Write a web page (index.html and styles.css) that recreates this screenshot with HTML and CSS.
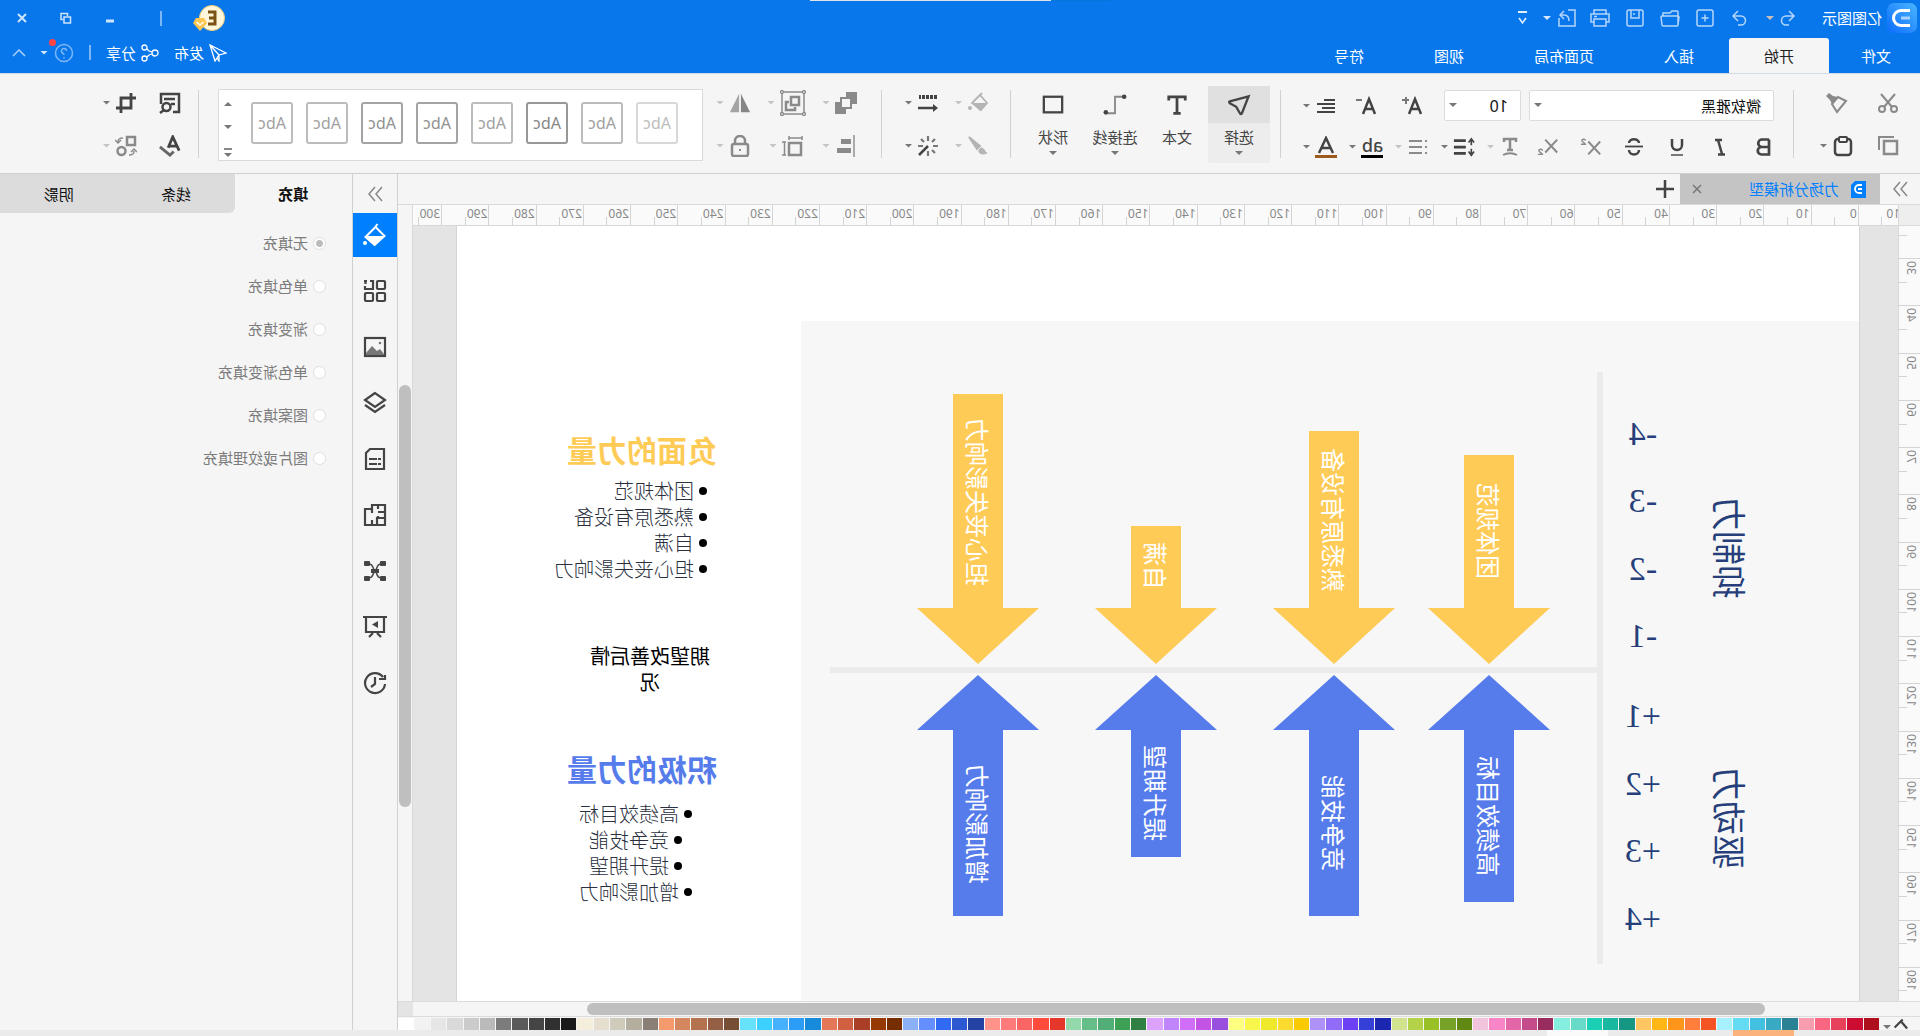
FILE: index.html
```html
<!DOCTYPE html>
<html lang="zh-CN">
<head>
<meta charset="utf-8">
<title>亿图图示</title>
<link rel="stylesheet" href="styles.css">
</head>
<body>
<div class="app">
  <header class="header">
    <div class="notch"></div>
    <div class="title-row">
      <svg class="logo" viewBox="0 0 30 30"><defs><linearGradient id="lg" x1="1" y1="1" x2="0" y2="0"><stop offset="0" stop-color="#0a6cff"/><stop offset="1" stop-color="#4bb6ff"/></linearGradient></defs><rect width="30" height="30" rx="7" fill="url(#lg)"/><path d="M7 7.500H16a7.500 7.500 0 0 1 0 15H7" fill="none" stroke="#fff" stroke-width="3"/><path d="M7 15H16" fill="none" stroke="#a9d3ff" stroke-width="3"/></svg>
      <span class="brand">亿图图示</span>
      <button class="quick q-first" aria-label="撤销"><svg viewBox="0 0 18 18"><path d="M7 2 2 7l5 5M2 7h8a4.500 4.500 0 0 1 0 9H7"/></svg></button>
      <i class="caret caret-title"></i>
      <button class="quick q-redo" aria-label="重做"><svg viewBox="0 0 18 18"><path d="M11 2l5 5-5 5M16 7H8a4.500 4.500 0 0 0 0 9h3"/></svg></button>
      <button class="quick" aria-label="新建"><svg viewBox="0 0 18 18"><rect x="1" y="1" width="16" height="16" rx="2"/><path d="M9 5.500v7M5.500 9h7"/></svg></button>
      <button class="quick" aria-label="打开"><svg viewBox="0 0 20 18"><path d="M2 16V3a1 1 0 0 1 1-1h5l2 2h7v3M2 16 1 8a1 1 0 0 1 1-1h16a1 1 0 0 1 1 1l-1 8a1 1 0 0 1-1 1H3a1 1 0 0 1-1-1z"/></svg></button>
      <button class="quick" aria-label="保存"><svg viewBox="0 0 18 18"><rect x="1" y="1" width="16" height="16" rx="2"/><path d="M5 1v8h8V1M10 4v2"/></svg></button>
      <button class="quick" aria-label="打印"><svg viewBox="0 0 20 18"><path d="M4 5V1h12v4M4 13H1V5h18v8h-3M4 10h12v7H4zM13 7.500h3"/></svg></button>
      <button class="quick q-export" aria-label="导出"><svg viewBox="0 0 18 18"><path d="M8 1H1v16h16V9M12 2l4 4-4 4M16 6h-4c-3 0-5 2-5 6"/></svg></button>
      <i class="caret caret-white"></i>
      <button class="quick q-more" aria-label="自定义"><svg viewBox="0 0 18 18"><path d="M5 3h9" stroke-width="2"/><path d="M6 9l3.500 5L13 9"/></svg></button>
      <span class="spacer"></span>
      <svg class="avatar" viewBox="0 0 36 30"><circle cx="15" cy="15" r="12.500" fill="#fff6dc" stroke="#f2cf75"/><path d="M19 9H12v12h7M12 15h6" fill="none" stroke="#7a5214" stroke-width="3"/><path d="M23 15h8l3 5-7 8-7-8z" fill="#ffc74f"/><path d="M23.500 19l3.500 3 3.500-3" fill="none" stroke="#fff" stroke-width="1.500"/></svg>
      <span class="bar bar-title"></span>
      <button class="win" aria-label="最小化"><svg viewBox="0 0 12 12"><path d="M2 9h8" stroke-width="3"/></svg></button>
      <button class="win" aria-label="还原"><svg viewBox="0 0 12 12"><path d="M1.500 5h6.500v6H1.500zM4.500 4V1.500h6.500v6H9"/></svg></button>
      <button class="win" aria-label="关闭"><svg viewBox="0 0 12 12"><path d="M2 2l8 8M10 2l-8 8" stroke-width="2"/></svg></button>
    </div>
    <div class="menu-row">
      <nav class="tabs">
        <a href="#" class="tab tab-file">文件</a>
        <a href="#" class="tab is-active">开始</a>
        <a href="#" class="tab">插入</a>
        <a href="#" class="tab">页面布局</a>
        <a href="#" class="tab">视图</a>
        <a href="#" class="tab">符号</a>
      </nav>
      <span class="spacer"></span>
      <button class="act"><svg viewBox="0 0 18 18"><path d="M1 9 17 1l-5 16-4-6zM17 1 8 11v6l2-3"/></svg>发布</button>
      <button class="act"><svg viewBox="0 0 18 18"><circle cx="4" cy="9" r="3"/><circle cx="14.500" cy="3.500" r="2.500"/><circle cx="14.500" cy="14.500" r="2.500"/><path d="M7 8l3-1 2-2M7 10l3 1 2 2"/></svg>分享</button>
      <span class="bar bar-menu"></span>
      <button class="help" aria-label="帮助"><svg viewBox="0 0 20 20"><circle cx="10" cy="10" r="8.500"/><path d="M7.500 8a2.500 2.500 0 1 1 3.500 2.300c-.7.400-1 .8-1 1.700M10 14v1.500"/></svg><span class="dot"></span></button>
      <i class="caret caret-white"></i>
      <button class="fold" aria-label="折叠"><svg viewBox="0 0 14 8"><path d="M1 7l6-6 6 6"/></svg></button>
    </div>
  </header>

  <section class="toolbar">
    <div class="group clip">
      <button class="tool mid" aria-label="剪切"><svg viewBox="0 0 22 22"><path d="M4 2l11 13M18 2 7 15" stroke-width="2"/><circle cx="5" cy="17" r="3"/><circle cx="17" cy="17" r="3"/></svg></button>
      <button class="tool mid" aria-label="格式刷"><svg viewBox="0 0 22 22"><path d="M2 9l8-4 6 7-5 8z" stroke-width="2"/><path d="M10 5l6 7 2-4 4-4-3-3-4 3z" fill="#8a8a8a" stroke="none"/></svg></button>
      <button class="tool mid" aria-label="复制"><svg viewBox="0 0 22 22"><rect x="2" y="2" width="0" height="0"/><rect x="2" y="6" width="13" height="13" stroke-width="2.500"/><path d="M5 2h15v13" stroke-width="2"/></svg></button>
      <button class="tool" aria-label="粘贴"><svg viewBox="0 0 22 22"><rect x="3" y="4" width="16" height="16" rx="3" stroke-width="2.500"/><rect x="7" y="2" width="8" height="5" rx="1" fill="#f5f5f5" stroke-width="2"/></svg><i class="caret"></i></button>
    </div>
    <span class="rule"></span>
    <div class="group font">
      <div class="frow">
        <label class="combo"><select aria-label="字体"><option>微软雅黑</option></select><i class="caret"></i></label>
        <label class="combo size"><select aria-label="字号"><option>10</option></select><i class="caret"></i></label>
        <button class="tool" aria-label="增大字号"><svg viewBox="0 0 22 22"><path d="M2 19 8 4l6 15M4 14h8" stroke-width="2.500"/><path d="M17 2v7M14 5h7" stroke-width="2" stroke="#777"/></svg></button>
        <button class="tool" aria-label="减小字号"><svg viewBox="0 0 22 22"><path d="M2 19 8 4l6 15M4 14h8" stroke-width="2.500"/><path d="M15 5h6" stroke-width="2" stroke="#777"/></svg></button>
        <button class="tool" aria-label="对齐"><svg viewBox="0 0 22 22"><path d="M2 5h11M2 9h18M2 13h13M2 17h18" stroke-width="2"/></svg><i class="caret"></i></button>
      </div>
      <div class="frow">
        <button class="tool narrow" aria-label="粗体"><svg viewBox="0 0 22 22"><path d="M5 3.500h7a3.700 3.700 0 0 1 0 7.500H5M5 11h7.500a3.700 3.700 0 0 1 0 7.500H5zM5 3.500v15" stroke-width="2.700"/></svg></button>
        <button class="tool narrow" aria-label="斜体"><svg viewBox="0 0 22 22"><path d="M9 4h7M6 18.500h7M13 4 9 18" stroke-width="2.500"/></svg></button>
        <button class="tool narrow" aria-label="下划线"><svg viewBox="0 0 22 22"><path d="M6 3v6a5 5 0 0 0 10 0V3" stroke-width="2.500"/><path d="M5 19h12" stroke-width="2" stroke="#777"/></svg></button>
        <button class="tool narrow" aria-label="删除线"><svg viewBox="0 0 22 22"><path d="M16 7c0-5-10-5-10 0M6 14c0 6 10 6 10 0" stroke-width="2.500"/><path d="M2 10.500h18" stroke-width="1.800"/></svg></button>
        <button class="tool narrow mid" aria-label="上标"><svg viewBox="0 0 24 22"><path d="M2 5l13 14M15 5 2 19" stroke-width="2.200"/><path d="M18 4c0-2 4-2 4 0 0 1.500-4 3-4 4h5" stroke-width="1.500"/></svg></button>
        <button class="tool narrow mid" aria-label="下标"><svg viewBox="0 0 24 22"><path d="M2 3l13 14M15 3 2 17" stroke-width="2.200"/><path d="M18 15c0-2 4-2 4 0 0 1.500-4 3-4 4h5" stroke-width="1.500"/></svg></button>
        <button class="tool off mid" aria-label="文字方向"><svg viewBox="0 0 22 22"><path d="M5 6V3h12v3M11 3v11M8 14h6" stroke-width="2.500"/><path d="M4 19c4-2.500 10-2.500 14 0" stroke-width="2"/></svg><i class="caret"></i></button>
        <button class="tool" aria-label="行距"><svg viewBox="0 0 24 22"><path d="M10 4h13M10 11h13M10 18h13" stroke-width="3"/><path d="M4 3v6M4 13v6M1 6l3-4 3 4M1 16l3 4 3-4" stroke-width="1.800"/></svg><i class="caret"></i></button>
        <button class="tool off mid" aria-label="项目符号"><svg viewBox="0 0 22 22"><path d="M2 5h2M2 11h2M2 17h2M7 5h13M7 11h13M7 17h13" stroke-width="2"/></svg><i class="caret"></i></button>
        <button class="tool" aria-label="突出显示"><span class="glyph glyph-hl">ab</span><i class="caret"></i></button>
        <button class="tool" aria-label="字体颜色"><span class="glyph glyph-color"><svg viewBox="0 0 18 18"><path d="M2 17 9 2l7 15M5 12h8" stroke-width="2.500"/></svg></span><i class="caret"></i></button>
      </div>
    </div>
    <span class="rule rule-font"></span>
    <div class="bigs">
      <button class="big is-on"><span class="big-icon"><svg viewBox="0 0 24 24"><path d="M1.500 3.500 22 9c1 .5 1 1.500 0 2l-7 4-4 7c-.8 1.200-1.800 1-2.200 0z" stroke-width="2.500" transform="translate(0 -1)"/></svg></span>选择<i class="caret"></i></button>
      <button class="big"><span class="big-icon"><svg viewBox="0 0 24 24"><path d="M3 7V3h18v4M12 3v18M8 21h8" stroke-width="3"/></svg></span>文本</button>
      <button class="big"><span class="big-icon"><svg viewBox="0 0 26 24"><path d="M4 3h9v18h9" stroke="#888" stroke-width="2"/><circle cx="3" cy="3" r="2.500" fill="#444" stroke="none"/><circle cx="23" cy="20" r="2.500" fill="#444" stroke="none"/></svg></span>连接线<i class="caret"></i></button>
      <button class="big"><span class="big-icon"><svg viewBox="0 0 24 24"><rect x="2" y="3" width="20" height="17" stroke-width="2.500"/></svg></span>形状<i class="caret"></i></button>
    </div>
    <span class="rule rule-bigs"></span>
    <div class="group two">
      <button class="tool off light" aria-label="填充颜色"><svg viewBox="0 0 22 22"><path d="M9 3 2 11l6 7 9-7-7-7M7 1l4 4" stroke-width="1.800"/><path d="M2 11h15l-8 8z" fill="#b4b4b4" stroke="none"/><circle cx="19" cy="16" r="2" fill="#b4b4b4" stroke="none"/></svg><i class="caret"></i></button>
      <button class="tool" aria-label="线条样式"><svg viewBox="0 0 22 22"><path d="M2 5h18" stroke-width="4" stroke-dasharray="3 1"/><path d="M4 16h17" stroke-width="2.500"/><path d="M6 12v8l-5-4z" fill="#444" stroke="none"/></svg><i class="caret"></i></button>
      <button class="tool off light" aria-label="线条颜色"><svg viewBox="0 0 22 22"><path d="M20 2 9 11l3 3z" fill="#b4b4b4" stroke-width="2"/><path d="M8 13c-4 0-3 4-6 5 4 2 9 1 8-3z" fill="#b4b4b4" stroke-width="1"/></svg><i class="caret"></i></button>
      <button class="tool" aria-label="效果"><svg viewBox="0 0 22 22"><path d="M11 11l9 9" stroke-width="2.500"/><path d="M11 1v5M11 16v5M1 11h5M16 11h5M4 4l3 3M18 4l-3 3M4 18l3-3" stroke-width="2.200" stroke="#777"/></svg><i class="caret"></i></button>
    </div>
    <span class="rule rule-style"></span>
    <div class="group three mid">
      <button class="tool off mid" aria-label="排列"><svg viewBox="0 0 22 22"><path d="M1 1h9v4H5v6H1zM21 21h-9v-4h5v-6h4z" fill="#8a8a8a"/><rect x="6" y="6" width="10" height="10" stroke-width="2"/></svg><i class="caret"></i></button>
      <button class="tool off mid" aria-label="组合"><svg class="wide" viewBox="0 0 26 26"><rect x="2" y="2" width="22" height="22" stroke-width="1.500"/><g fill="#f5f5f5" stroke-width="1.300"><circle cx="2" cy="2" r="1.500"/><circle cx="24" cy="2" r="1.500"/><circle cx="2" cy="24" r="1.500"/><circle cx="24" cy="24" r="1.500"/></g><rect x="7" y="7" width="8" height="8" stroke-width="2.500"/><path d="M17 12h3v8h-9v-3" stroke-width="2.500"/></svg><i class="caret"></i></button>
      <button class="tool off mid" aria-label="翻转"><svg viewBox="0 0 24 22"><path d="M11 1v20H1z" fill="#858585" stroke="none"/><path d="M13 1v20h10z" fill="#a4a4a4" stroke="none"/></svg><i class="caret"></i></button>
      <button class="tool off mid" aria-label="对齐"><svg viewBox="0 0 22 22"><path d="M3 0v22" stroke-width="2" stroke="#aaa"/><rect x="7" y="5" width="8" height="3" fill="#8a8a8a"/><rect x="7" y="14" width="12" height="3" fill="#8a8a8a"/></svg><i class="caret"></i></button>
      <button class="tool off mid" aria-label="大小"><svg viewBox="0 0 22 22"><rect x="3" y="8" width="12" height="12" stroke-width="2.500"/><path d="M2 3h13M2 1v4M15 1v4M19.500 7v13M18 7h4M18 20h4" stroke-width="1.500"/></svg><i class="caret"></i></button>
      <button class="tool off mid" aria-label="锁定"><svg viewBox="0 0 22 22"><rect x="3" y="9" width="16" height="12" rx="2" stroke-width="2.500"/><path d="M6 9V6a5 5 0 0 1 10 0v3" stroke-width="2.500"/><path d="M10 15h2" stroke-width="2"/></svg><i class="caret"></i></button>
    </div>
    <div class="gallery">
      <div class="samples">
        <button class="sample s1">Abc</button>
        <button class="sample s2">Abc</button>
        <button class="sample s3">Abc</button>
        <button class="sample s2">Abc</button>
        <button class="sample s4">Abc</button>
        <button class="sample s4">Abc</button>
        <button class="sample s2">Abc</button>
        <button class="sample s2">Abc</button>
      </div>
      <div class="gallery-nav">
        <button aria-label="上"><i class="caret up"></i></button>
        <button aria-label="下"><i class="caret"></i></button>
        <button aria-label="更多" class="more"><i class="caret"></i></button>
      </div>
    </div>
    <span class="rule rule-gallery"></span>
    <div class="group two">
      <button class="tool" aria-label="查找"><svg viewBox="0 0 22 22"><path d="M8 20H2V2h18v10M6 7h11M6 12h4" stroke-width="2.500"/><circle cx="14.500" cy="15" r="4" stroke-width="2.500"/><path d="M17 18l4 3" stroke-width="2.500"/></svg></button>
      <button class="tool" aria-label="裁剪"><svg viewBox="0 0 22 22"><path d="M6 1v15h15M1 6h15v15" stroke-width="2.800"/></svg><i class="caret"></i></button>
      <button class="tool" aria-label="拼写检查"><svg viewBox="0 0 24 24"><path d="M2 17 9 2l5 12M5 12h8" stroke-width="3"/><path d="M8 18l4 4 11-9" stroke-width="3" stroke="#666"/></svg></button>
      <button class="tool off mid" aria-label="替换"><svg viewBox="0 0 22 22"><rect x="2" y="2" width="8" height="8" stroke-width="2.500"/><circle cx="15.500" cy="16" r="4" stroke-width="2.500"/><path d="M14 3c4 0 5 1 5 4M16 5l3 3 3-3M8 20c-4 0-5-1-5-4M0 17l3-3 3 3" stroke-width="1.500"/></svg><i class="caret"></i></button>
    </div>
  </section>

  <main class="workspace">
    <div class="editor">
      <div class="doc-tabs">
        <button class="expand" aria-label="展开"><svg viewBox="0 0 16 16"><path d="M1 1l6 7-6 7M8 1l6 7-6 7"/></svg></button>
        <div class="doc-tab"><svg class="doc-icon" viewBox="0 0 15 18"><path d="M0 1h11l4 4v13H0z" fill="#0080ff"/><path d="M4 5H7a4 4 0 0 1 0 8H4M4 9h4" fill="none" stroke="#fff" stroke-width="1.800"/></svg><span>力场分析模型</span><button class="doc-close" aria-label="关闭"><svg viewBox="0 0 10 10"><path d="M1 1l8 8M9 1 1 9"/></svg></button></div>
        <button class="doc-add" aria-label="新建"><svg viewBox="0 0 18 18"><path d="M9 0v18M0 9h18"/></svg></button>
      </div>
      <div class="stage">
        <div class="corner"></div>
        <div class="ruler-h"><div class="ticks"><span>-10</span><span>0</span><span>10</span><span>20</span><span>30</span><span>40</span><span>50</span><span>60</span><span>70</span><span>80</span><span>90</span><span>100</span><span>110</span><span>120</span><span>130</span><span>140</span><span>150</span><span>160</span><span>170</span><span>180</span><span>190</span><span>200</span><span>210</span><span>220</span><span>230</span><span>240</span><span>250</span><span>260</span><span>270</span><span>280</span><span>290</span><span>300</span></div></div>
        <div class="scroll-v"><div class="thumb"></div></div>
        <div class="ruler-v"><div class="ticks-v"><div></div><div><b>30</b></div><div><b>40</b></div><div><b>50</b></div><div><b>60</b></div><div><b>70</b></div><div><b>80</b></div><div><b>90</b></div><div><b>100</b></div><div><b>110</b></div><div><b>120</b></div><div><b>130</b></div><div><b>140</b></div><div><b>150</b></div><div><b>160</b></div><div><b>170</b></div><div><b>180</b></div></div></div>
        <div class="canvas">
          <div class="sheet">
            <svg class="chart" width="1058" height="775" viewBox="0 0 1058 775">
              <rect y="95" width="1058" height="680" fill="#f7f7f7"/>
              <rect x="256" y="146" width="6" height="592" fill="#ebebeb"/>
              <rect x="262" y="441" width="767" height="6" fill="#ebebeb"/>
              <g class="minus">
                <path d="M345 229h50v153h36l-61 56-61-56h36z"/>
                <path d="M500 205h50v177h36l-61 56-61-56h36z"/>
                <path d="M678 300h50v82h36l-61 56-61-56h36z"/>
                <path d="M856 168h50v214h36l-61 56-61-56h36z"/>
              </g>
              <g class="plus">
                <path d="M370 449l61 55h-36v172h-50V504h-36z"/>
                <path d="M525 449l61 55h-36v186h-50V504h-36z"/>
                <path d="M703 449l61 55h-36v127h-50V504h-36z"/>
                <path d="M881 449l61 55h-36v186h-50V504h-36z"/>
              </g>
              <g class="arrow-text">
                <text transform="translate(370 305) rotate(-90)">团体规范</text>
                <text transform="translate(525 294) rotate(-90)">熟悉原有设备</text>
                <text transform="translate(703 340) rotate(-90)">自满</text>
                <text transform="translate(881 276) rotate(-90)">担心丧失影响力</text>
                <text transform="translate(370 590) rotate(-90)">高绩效目标</text>
                <text transform="translate(525 597) rotate(-90)">竞争技能</text>
                <text transform="translate(703 567) rotate(-90)">提升期望</text>
                <text transform="translate(881 598) rotate(-90)">增加影响力</text>
              </g>
              <g class="axis-text">
                <text transform="translate(129 322) rotate(-90)">抑制力</text>
                <text transform="translate(129 592) rotate(-90)">驱动力</text>
              </g>
              <g class="scale">
                <text x="216" y="219">-4</text><text x="216" y="286">-3</text><text x="216" y="354">-2</text><text x="216" y="421">-1</text>
                <text x="216" y="501">+1</text><text x="216" y="569">+2</text><text x="216" y="636">+3</text><text x="216" y="704">+4</text>
              </g>
            </svg>
            <div class="note note-minus"><h2>负面的力量</h2><ul><li>团体规范</li><li>熟悉原有设备</li><li>自满</li><li>担心丧失影响力</li></ul></div>
            <p class="note note-goal">期望改善后情况</p>
            <div class="note note-plus"><h2>积极的力量</h2><ul><li>高绩效目标</li><li>竞争技能</li><li>提升期望</li><li>增加影响力</li></ul></div>
          </div>
        </div>
      </div>
      <div class="scroll-h"><div class="track"><div class="thumb"></div></div><div class="grip"></div></div>
      <div class="palette">
        <button class="palette-fill" aria-label="填充颜色"><svg viewBox="0 0 18 12"><path d="M6 1l9 9M8 3 1 11" stroke-width="2.500"/></svg><i class="caret"></i></button>
        <div class="swatches" id="swatches"></div>
      </div>
    </div>

    <nav class="rail">
      <button class="rail-head" aria-label="折叠"><svg viewBox="0 0 16 16"><path d="M1 1l6 7-6 7M8 1l6 7-6 7"/></svg></button>
      <button class="rail-btn is-on" aria-label="填充"><svg viewBox="0 0 24 24"><path d="M9.500 1l3 4 9 9-9 8-10-9 9-9" stroke-width="2"/><path d="M3 13h18l-9 10z" fill="#fff" stroke="none"/><circle cx="22" cy="20" r="2" fill="#fff" stroke="none"/></svg></button>
      <button class="rail-btn" aria-label="符号库"><svg viewBox="0 0 24 24"><rect x="2" y="2" width="8" height="8" rx="1"/><rect x="2" y="14" width="8" height="8" rx="1"/><rect x="14" y="14" width="8" height="8" rx="1"/><path d="M17 2h-3v8h8V7M20 2h3M21.500 1v4"/></svg></button>
      <button class="rail-btn" aria-label="图片"><svg viewBox="0 0 24 24"><rect x="2" y="3" width="20" height="18"/><path d="M3 19l4-5 3 2 5-5 6 7v2H3z" fill="#777" stroke="none"/><circle cx="7" cy="8" r="1.300" fill="#777" stroke="none"/></svg></button>
      <button class="rail-btn" aria-label="图层"><svg viewBox="0 0 24 24"><path d="M12 2l10 7-10 7L2 9zM2 14l10 7 10-7"/></svg></button>
      <button class="rail-btn" aria-label="页面"><svg viewBox="0 0 24 24"><path d="M3 2h14l4 4v16H3zM6 12h3M6 17h3M10 12h8M10 17h8"/></svg></button>
      <button class="rail-btn" aria-label="平面图"><svg viewBox="0 0 24 24"><path d="M2 2h13v4h7v16H2zM2 9h7M9 2v4M15 6v4M2 15h8v7M9 13v3M15 17v5"/></svg></button>
      <button class="rail-btn" aria-label="导图"><svg viewBox="0 0 24 24"><g fill="#444" stroke="none"><rect x="1" y="2" width="6" height="5" rx="1"/><rect x="17" y="2" width="6" height="5" rx="1"/><rect x="1" y="17" width="6" height="5" rx="1"/><rect x="17" y="17" width="6" height="5" rx="1"/><rect x="8" y="10" width="8" height="4"/></g><path d="M6 5c5 0 4 7 6 7s1-7 6-7M6 19c5 0 4-7 6-7s1 7 6 7" stroke-width="1.500"/></svg></button>
      <button class="rail-btn" aria-label="演示"><svg viewBox="0 0 24 24"><path d="M0 2h24M3 2v15h18V2M10 18l-4 4M14 18l4 4"/><path d="M9 6v7l6-3.500z" fill="#444" stroke="none"/></svg></button>
      <button class="rail-btn" aria-label="历史"><svg viewBox="0 0 24 24"><path d="M4 6a10 10 0 1 1-2 7M2 4v4h6M12 6v7l4 3"/></svg></button>
    </nav>

    <aside class="panel">
      <div class="panel-tabs">
        <button class="panel-tab is-active">填充</button>
        <button class="panel-tab first-off">线条</button>
        <button class="panel-tab">阴影</button>
      </div>
      <form class="fills">
        <label><input type="radio" name="fill" checked>无填充</label>
        <label><input type="radio" name="fill">单色填充</label>
        <label><input type="radio" name="fill">渐变填充</label>
        <label><input type="radio" name="fill">单色渐变填充</label>
        <label><input type="radio" name="fill">图案填充</label>
        <label><input type="radio" name="fill">图片或纹理填充</label>
      </form>
    </aside>
  </main>
  <footer class="desk"><span class="desk-a"></span><span class="desk-b"></span></footer>
</div>
<script src="palette.js"></script>
</body>
</html>
```
FILE: palette.js
```js
const colors = `ad0f1d cc0c33 e8415c f76782 f89db0
2b8294 3aa9c4 41c1df 63dbf2 a7f0fe f45324 ff7e3b ff9519 ffb716 ffc661
159784 18b79f 1bcfb4 67dac8 85eedf 992c5f c44c8a e367a8 f886c6 f2c3dc
5f8913 77a228 99c025 b3d24a d2e38f 1b27b0 3440d8 6c40f3 916cf8 ae91f7
fbca00 fadb2e efe92b f8f54b fdff80 9a50de c253e4 d16ef7 c084fd dda2fd
308044 3da055 50ae76 65be88 93d9ab e53729 fd4b3b f96464 ff7a7a ff9389
2442a4 2c58d1 3169f3 658fff 8bb0f5 762e00 953900 a83f26 d15f41 e57759
188adb 2c9df6 46b1ff 3bd0ff 66e2ff 754e35 945f44 b4724f d4875f f59a6c
8a7f76 b3ae9e cfccbc e6dfd0 f4eedb
1a1a1a 303030 454545 5a5a5a 7c7c7c bababa cbcbcb d9d9d9 e6e6e6 f2f2f2 ffffff`.split(/\s+/);
const box = document.getElementById('swatches');
for (const c of colors) {
  const s = document.createElement('span');
  s.style.background = '#' + c;
  box.append(s);
}
```
FILE: styles.css
```css
* { box-sizing: border-box; }
body {
  margin: 0;
  font: 15px/20px "Noto Sans", "Noto Sans CJK SC", sans-serif;
  color: #222;
}
button {
  padding: 0;
  border: 0;
  background: none;
  font: inherit;
  color: inherit;
}
svg { display: block; flex: none; fill: none; stroke: currentColor; }

/* The whole window is shown flipped left to right. */
.app {
  display: flex;
  flex-direction: column;
  height: 100vh;
  overflow: hidden;
  background: #f5f5f5;
  transform: scaleX(-1);
}
.spacer { flex: 1; }
.caret {
  flex: none;
  width: 8px;
  height: 4px;
  background: #777;
  clip-path: polygon(0 0, 100% 0, 50% 100%);
}
.caret.up { clip-path: polygon(50% 0, 100% 100%, 0 100%); }
.caret-white { background: #d5e8fd; }
.caret-title { background: #c9bfb8; }

/* Header */
.header {
  position: relative;
  flex: none;
  background: #0877ec;
  color: #fff;
  border-bottom: 1px solid #d3dbe6;
}
.notch {
  position: absolute;
  top: 0;
  left: 810px;
  width: 300px;
  height: 1px;
  background: linear-gradient(90deg, #0078d7 59px, #dfe3e8 59px);
}
.title-row, .menu-row { display: flex; align-items: center; }
.title-row { height: 36px; padding-left: 3px; }
.logo { width: 30px; height: 30px; stroke: none; }
.brand { margin-left: 5px; }
.quick {
  display: flex;
  justify-content: center;
  width: 35px;
  color: #b5d6fa;
}
.quick svg { height: 18px; stroke-width: 1.5; }
.q-first { width: 26px; margin-left: 22px; }
.q-redo { margin-left: 8px; }
.q-export { width: 32px; }
.q-more { width: 24px; margin-left: 8px; color: #e4f0fe; }
.avatar { width: 36px; height: 30px; margin-right: 29px; stroke: none; }
.bar { width: 2px; height: 15px; background: #7db7f6; }
.bar-title { margin-right: 28px; }
.win { display: flex; justify-content: center; width: 44px; color: #cfe4fc; }
.win svg { width: 12px; height: 12px; stroke-width: 1.5; }
.menu-row { height: 37px; padding: 0 12px 4px 0; }
.tabs { display: flex; align-self: flex-end; height: 35px; margin-bottom: -4px; }
.tab {
  padding: 8px 35px 0;
  color: #fff;
  text-decoration: none;
}
.tab-file { width: 91px; padding: 8px 0 0 29px; }
.tab.is-active { background: #f5f5f5; color: #222; border-radius: 3px 3px 0 0; }
.act { display: flex; align-items: center; gap: 5px; margin-right: 15px; }
.act svg { width: 18px; height: 18px; stroke-width: 1.3; }
.bar-menu { margin-right: 15px; }
.help { position: relative; margin-right: 6px; color: #7db7f6; }
.help svg { width: 20px; height: 20px; stroke-width: 1.5; }
.dot {
  position: absolute;
  top: -4px;
  right: -5px;
  width: 7px;
  height: 7px;
  border-radius: 50%;
  background: #ff4444;
}
.fold { margin-left: 14px; color: #a9cffa; }
.fold svg { width: 14px; height: 8px; stroke-width: 1.5; }

/* Toolbar */
.toolbar {
  display: flex;
  flex: none;
  height: 100px;
  padding-right: 95px;
  border-bottom: 1px solid #d0d0d0;
  color: #444;
}
.group { display: grid; grid-auto-rows: 43px; align-content: start; padding-top: 7px; }
.clip { grid-template-columns: 44px 44px; column-gap: 7px; padding-left: 10px; margin-right: 21px; }
.two { grid-template-columns: 50px 50px; }
.three { grid-template-columns: 53px 53px 53px; padding-left: 15px; }
.tool {
  display: flex;
  align-items: center;
  justify-content: center;
  gap: 5px;
  width: 100%;
}
.tool svg { width: 22px; height: 22px; stroke-width: 2; }
.tool .wide { width: 26px; height: 26px; }
.mid { color: #8a8a8a; }
.light { color: #b4b4b4; }
.off .caret { background: #c4c4c4; }
.rule { flex: none; width: 1px; height: 68px; margin-top: 16px; background: #d0d0d0; }
.font { grid-template-rows: 43px 39px; padding: 10px 0 0 8px; }
.frow { display: flex; align-items: center; }
.font .tool { width: 46px; }
.font .narrow { width: 43px; }
.combo { position: relative; width: 245px; margin: 0 8px 0 11px; }
.combo select {
  width: 100%;
  height: 31px;
  padding: 0 12px;
  border: 1px solid #dcdcdc;
  border-radius: 2px;
  background: #fff;
  appearance: none;
  font: inherit;
  color: #111;
}
.combo .caret { position: absolute; right: 5px; top: 13px; }
.combo.size { width: 77px; margin: 0 9px 0 0; font-size: 16px; }
.glyph { width: 22px; border-bottom: 3px solid #000; }
.glyph-hl { font-size: 18px; line-height: 20px; text-align: center; font-weight: 500; }
.glyph-color { padding: 1px 2px; border-color: #9c5a1c; }
.glyph-color svg { width: 18px; height: 18px; }
.rule-font { margin-left: 16px; }
.bigs { display: flex; margin: 12px 11px 0 10px; }
.big {
  display: flex;
  flex-direction: column;
  align-items: center;
  width: 62px;
  height: 77px;
  border-radius: 2px;
}
.big .caret { margin-top: 4px; }
.big-icon {
  display: flex;
  align-items: center;
  justify-content: center;
  width: 100%;
  height: 37px;
  margin-bottom: 4px;
}
.big-icon svg { width: 24px; height: 22px; }
.big.is-on { background: #ededed; }
.is-on .big-icon { background: #e0e0e0; }
.rule-bigs { margin-right: 13px; }
.rule-style { margin-left: 15px; }
.gallery {
  display: flex;
  flex: 1;
  height: 72px;
  margin: 15px 19px 0 4px;
  padding: 12px 5px 0 24px;
  background: #fff;
  border: 1px solid #dadada;
}
.samples { display: flex; flex: 1; gap: 13px; overflow: hidden; }
.sample {
  flex: none;
  width: 42px;
  height: 42px;
  border: 2px solid #b8b8b8;
  border-radius: 3px;
  font-size: 16px;
  color: #a0a0a0;
}
.s1 { border-color: #d8d8d8; color: #bcbcbc; }
.s2 { border-color: #bcbcbc; }
.s3 { border-color: #989898; color: #858585; }
.s4 { border-color: #a4a4a4; color: #909090; }
.gallery-nav { display: flex; flex-direction: column; gap: 19px; width: 8px; }
.gallery-nav button { display: flex; }
.gallery-nav .more { border-top: 2px solid #888; padding-top: 3px; }
.rule-gallery { margin-right: 3px; }

/* Workspace */
.workspace { display: flex; flex: 1; min-height: 0; }
.editor {
  display: flex;
  flex: 1;
  flex-direction: column;
  min-width: 0;
  border-right: 1px solid #d0d0d0;
}
.doc-tabs { display: flex; flex: none; height: 31px; border-bottom: 1px solid #dadada; }
.expand, .rail-head { display: flex; align-items: center; justify-content: center; color: #888; }
.expand { width: 40px; }
.expand svg, .rail-head svg { width: 16px; height: 16px; stroke-width: 1.5; }
.doc-tab {
  display: flex;
  align-items: center;
  width: 200px;
  padding: 0 12px 0 14px;
  background: #c4c4c4;
  color: #0080ff;
}
.doc-icon { width: 15px; height: 18px; margin-right: 12px; stroke: none; }
.doc-close { margin-left: auto; color: #777; }
.doc-close svg { width: 10px; height: 10px; stroke-width: 1.5; }
.doc-add { width: 30px; color: #444; }
.doc-add svg { width: 18px; height: 18px; margin-left: 6px; stroke-width: 2.5; }
.stage {
  display: grid;
  flex: 1;
  grid-template: 21px minmax(0, 1fr) / 22px minmax(0, 1fr) 15px;
  min-height: 0;
}
.corner { background: #eee; border: 1px solid #dadada; border-width: 0 1px 1px 0; }
.ruler-h, .ruler-v {
  overflow: hidden;
  background: #fafafa;
  font-size: 12px;
  line-height: 17px;
  color: #888;
}
.ruler-h { border-bottom: 1px solid #d8d8d8; }
.ticks { display: flex; width: 1511px; height: 20px; margin-left: -8px; }
.ticks span {
  flex: 1;
  padding-left: 1px;
  border-left: 1px solid #d4d4d4;
  background: linear-gradient(#d4d4d4, #d4d4d4) 50% 100% / 1px 8px no-repeat;
}
.scroll-v {
  display: grid;
  grid-row: 1 / 3;
  grid-column: 3;
  grid-template-rows: 180fr 422fr 194fr;
  padding: 0 1px;
  border-left: 1px solid #dadada;
}
.scroll-v .thumb { grid-row: 2; }
.thumb { background: #bfbfbf; border-radius: 6px; }
.ruler-v { border-right: 1px solid #d8d8d8; }
.ticks-v { display: flex; flex-direction: column; height: 803px; margin-top: -15px; }
.ticks-v div {
  flex: 1;
  padding-top: 2px;
  border-top: 1px solid #d4d4d4;
  background: linear-gradient(#d4d4d4, #d4d4d4) 100% 50% / 8px 1px no-repeat;
}
.ticks-v b { display: block; width: 17px; font-weight: 400; writing-mode: vertical-rl; transform: rotate(180deg); }
.canvas { overflow: hidden; background: #e4e4e4; padding-left: 38px; }
.sheet {
  position: relative;
  width: 1404px;
  height: 100%;
  background: #fff;
  border: 1px solid #d4d4d4;
  border-width: 0 1px;
}
.chart { stroke: none; }
.chart text { text-anchor: middle; dominant-baseline: central; font-family: "Noto Sans CJK SC", sans-serif; }
.minus { fill: #ffcb57; }
.plus { fill: #567ceb; }
.arrow-text { fill: #fff; font-size: 24px; }
.axis-text { fill: #263f7a; font-size: 34px; }
.chart .scale text { fill: #263f7a; font: 34px "Liberation Serif", serif; dominant-baseline: auto; }
.note {
  position: absolute;
  left: 1142px;
  margin: 0;
  font-size: 20px;
  line-height: 26px;
  font-family: "Noto Sans CJK SC", sans-serif;
}
.note h2 { margin: 0; font-size: 30px; line-height: 40px; font-weight: 700; }
.note ul { margin: 0; padding: 0; list-style: none; font-weight: 300; color: #2a3040; }
.note li { display: flex; align-items: center; gap: 5px; }
.note li::before { content: ""; width: 8px; height: 8px; border-radius: 50%; background: #000; }
.note-minus { top: 203px; }
.note-minus h2 { color: #ffcb57; }
.note-minus ul { padding: 9px 0 0 10px; }
.note-goal { top: 417px; width: 134px; padding: 0 7px; text-align: center; color: #000; }
.note-plus { top: 522px; }
.note-plus h2 { color: #567ceb; }
.note-plus ul { width: 150px; padding: 13px 0 0 13px; }
.note-plus li { justify-content: center; }
.scroll-h { display: flex; flex: none; height: 16px; border: 1px solid #dcdcdc; border-width: 1px 0; }
.track { display: grid; flex: 1; grid-template-columns: 155fr 1178fr 174fr; padding: 1px 0; }
.track .thumb { grid-column: 2; }
.grip { width: 15px; background: #e4e4e4; }
.palette { display: flex; flex: none; height: 13px; padding-top: 1px; }
.palette-fill { display: flex; gap: 1px; width: 41px; padding-left: 12px; overflow: hidden; color: #444; }
.palette-fill svg { width: 16px; height: 12px; }
.palette-fill .caret { margin-top: 7px; }
.swatches { display: flex; flex: 1; gap: 1px; }
.swatches span { flex: 1; }

/* Side rail and panel */
.rail { display: flex; flex: none; flex-direction: column; width: 45px; border-right: 1px solid #d0d0d0; }
.rail-head { height: 39px; }
.rail-btn { display: flex; align-items: center; justify-content: center; height: 56px; color: #444; }
.rail-btn svg { width: 24px; height: 24px; stroke-width: 2.2; }
.rail-btn.is-on { height: 44px; margin-bottom: 6px; background: #0080ff; color: #fff; }
.panel { flex: none; width: 352px; }
.panel-tabs { display: flex; height: 39px; color: #111; }
.panel-tab { flex: 1; background: #dcdcdc; }
.panel-tab.is-active { background: none; font-weight: 700; }
.first-off { border-bottom-left-radius: 6px; }
.fills { display: flex; flex-direction: column; gap: 23px; padding: 20px 0 0 26px; color: #7c7c7c; }
.fills label { display: flex; align-items: center; gap: 5px; }
.fills input {
  width: 13px;
  height: 13px;
  margin: 0;
  appearance: none;
  border: 1px solid #dfdfdf;
  border-radius: 50%;
  background: #fff;
}
.fills input:checked { background: radial-gradient(#bbb 3px, #fff 4px); }

.desk { display: flex; flex: none; height: 6px; padding-left: 126px; background: #ebebeb; }
.desk-a { width: 61px; background: #fcb27c; }
.desk-b { width: 61px; margin-left: 125px; background: #fafafa; }
```
